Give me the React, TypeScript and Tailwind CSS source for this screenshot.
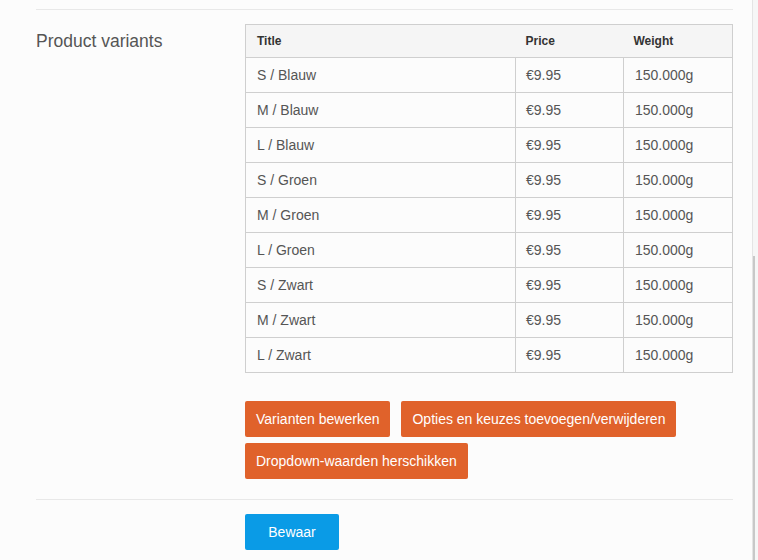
// Product variants section of a product edit form

const VARIANTS = [
  'S / Blauw',
  'M / Blauw',
  'L / Blauw',
  'S / Groen',
  'M / Groen',
  'L / Groen',
  'S / Zwart',
  'M / Zwart',
  'L / Zwart',
]

function OrangeButton({ children }: { children: React.ReactNode }) {
  return (
    <button className="h-9 rounded-[2px] bg-[#e0622b] px-[11px] text-[14px] text-white">
      {children}
    </button>
  )
}

export default function App() {
  return (
    <div className="flex h-[560px] w-[758px] overflow-hidden bg-[#fcfcfc] font-['Liberation_Sans',Arial,sans-serif]">
      {/* Main form column */}
      <div className="w-[752px] shrink-0 pl-9 pr-[19px]">
        <div className="mt-[9px] border-t border-[#e8e8e8]" />

        <div className="flex pt-[14px]">
          <div className="w-[209px] shrink-0 pt-[4px] text-[17.5px] text-[#555]">Product variants</div>

          <div className="w-[488px]">
            <table className="w-[488px] border-collapse border border-[#cfcfcf] text-[14px] text-[#555]">
              <thead>
                <tr className="h-[33px] bg-[#f5f5f5] text-left text-[12px] font-bold text-[#333]">
                  <th className="w-[270px] pl-[11px] font-bold">Title</th>
                  <th className="w-[108px] pl-[10px] font-bold">Price</th>
                  <th className="pl-[10px] font-bold">Weight</th>
                </tr>
              </thead>
              <tbody>
                {VARIANTS.map((v) => (
                  <tr key={v} className="h-[35px] border-t border-[#cfcfcf]">
                    <td className="pl-[11px]">{v}</td>
                    <td className="border-l border-[#cfcfcf] pl-[10px]">€9.95</td>
                    <td className="border-l border-[#cfcfcf] pl-[11px]">150.000g</td>
                  </tr>
                ))}
              </tbody>
            </table>

            <div className="mt-[28px] flex flex-wrap gap-x-[11px] gap-y-[6px]">
              <OrangeButton>Varianten bewerken</OrangeButton>
              <OrangeButton>Opties en keuzes toevoegen/verwijderen</OrangeButton>
              <OrangeButton>Dropdown-waarden herschikken</OrangeButton>
            </div>
          </div>
        </div>

        <div className="mt-[20px] border-t border-[#e8e8e8]" />

        <div className="pl-[209px] pt-[14px]">
          <button className="h-9 w-[94px] rounded-[2px] bg-[#0a9be6] text-[14px] text-white">Bewaar</button>
        </div>
      </div>

      {/* Scrollbar strip */}
      <div className="flex w-[6px] shrink-0 flex-col border-l border-[#e4e4e4] bg-[#f6f6f6]">
        <div className="mt-[256px] flex-1 border-l-2 border-[#c8c8c8]" />
      </div>
    </div>
  )
}
